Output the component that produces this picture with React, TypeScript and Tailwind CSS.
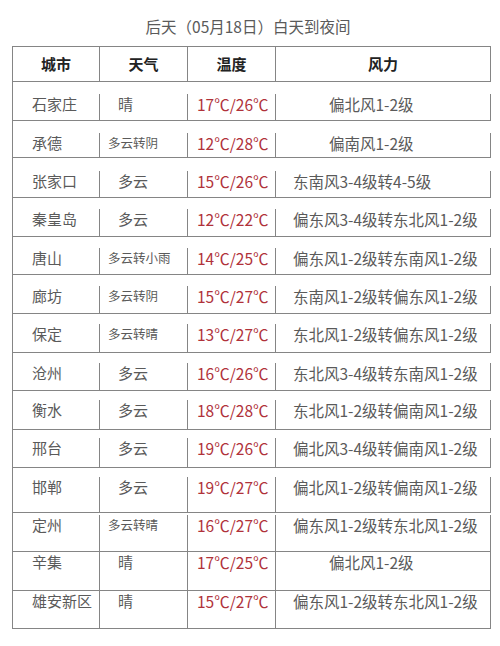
type Row = {
  city: string;
  weather: string;
  temp: string;
  wind: string;
  row: string;
  weatherCls: string;
  windCls: string;
};

const LONG_W = "pl-[8px] text-[12.5px]";
const SHORT_W = "pl-[18px] text-[15px]";
const LONG_F = "pl-[17px]";
const SHORT_F = "pl-[53px]";

const rows: Row[] = [
  { city: "石家庄", weather: "晴", temp: "17℃/26℃", wind: "偏北风1-2级", row: "h-[39px] pt-[12px]", weatherCls: SHORT_W, windCls: SHORT_F },
  { city: "承德", weather: "多云转阴", temp: "12℃/28℃", wind: "偏南风1-2级", row: "h-[37px] pt-[12px]", weatherCls: LONG_W, windCls: SHORT_F },
  { city: "张家口", weather: "多云", temp: "15℃/26℃", wind: "东南风3-4级转4-5级", row: "h-[40px] pt-[13px]", weatherCls: SHORT_W, windCls: LONG_F },
  { city: "秦皇岛", weather: "多云", temp: "12℃/22℃", wind: "偏东风3-4级转东北风1-2级", row: "h-[39px] pt-[11px]", weatherCls: SHORT_W, windCls: LONG_F },
  { city: "唐山", weather: "多云转小雨", temp: "14℃/25℃", wind: "偏东风1-2级转东南风1-2级", row: "h-[38px] pt-[11px]", weatherCls: LONG_W, windCls: LONG_F },
  { city: "廊坊", weather: "多云转阴", temp: "15℃/27℃", wind: "东南风1-2级转偏东风1-2级", row: "h-[39px] pt-[11px]", weatherCls: LONG_W, windCls: LONG_F },
  { city: "保定", weather: "多云转晴", temp: "13℃/27℃", wind: "东北风1-2级转偏东风1-2级", row: "h-[39px] pt-[10px]", weatherCls: LONG_W, windCls: LONG_F },
  { city: "沧州", weather: "多云", temp: "16℃/26℃", wind: "东北风3-4级转东南风1-2级", row: "h-[38px] pt-[10px]", weatherCls: SHORT_W, windCls: LONG_F },
  { city: "衡水", weather: "多云", temp: "18℃/28℃", wind: "东北风1-2级转偏南风1-2级", row: "h-[39px] pt-[9px]", weatherCls: SHORT_W, windCls: LONG_F },
  { city: "邢台", weather: "多云", temp: "19℃/26℃", wind: "偏北风3-4级转偏南风1-2级", row: "h-[38px] pt-[8px]", weatherCls: SHORT_W, windCls: LONG_F },
  { city: "邯郸", weather: "多云", temp: "19℃/27℃", wind: "偏北风1-2级转偏南风1-2级", row: "h-[45px] pt-[9px]", weatherCls: SHORT_W, windCls: LONG_F },
  { city: "定州", weather: "多云转晴", temp: "16℃/27℃", wind: "偏东风1-2级转东北风1-2级", row: "h-[39px] pt-[2px]", weatherCls: LONG_W, windCls: LONG_F },
  { city: "辛集", weather: "晴", temp: "17℃/25℃", wind: "偏北风1-2级", row: "h-[39px] pt-[0px]", weatherCls: SHORT_W, windCls: SHORT_F },
  { city: "雄安新区", weather: "晴", temp: "15℃/27℃", wind: "偏东风1-2级转东北风1-2级", row: "h-[38px] pt-[0px]", weatherCls: SHORT_W, windCls: LONG_F },
];

const cols = "grid grid-cols-[87px_88px_88px_1fr]";
const cell = "border-r border-[#858585]";

export default function App() {
  return (
    <div className="w-[500px] h-[646px] bg-white font-['Noto_Sans_CJK_SC','Noto_Sans',sans-serif] text-[#5a5a5a]">
      <div className="pt-[16px] h-[46px] text-center text-[15.5px] leading-[20px] pr-[4px]">
        后天（05月18日）白天到夜间
      </div>

      <div className="ml-[12px] w-[479px] border-l border-t border-[#858585]">
        {/* header */}
        <div className={`${cols} h-[35px] border-b border-[#858585] text-[15px] font-bold text-[#222]`}>
          <div className={`${cell} flex items-center justify-center`}>城市</div>
          <div className={`${cell} flex items-center justify-center`}>天气</div>
          <div className={`${cell} flex items-center justify-center`}>温度</div>
          <div className={`${cell} flex items-center justify-center`}>风力</div>
        </div>

        {rows.map((r) => (
          <div key={r.city} className={`${cols} ${r.row} border-b border-[#858585] leading-[20px]`}>
            <div className={`${cell} pl-[19px] text-[15px] whitespace-nowrap`}>{r.city}</div>
            <div className={`${cell} ${r.weatherCls} whitespace-nowrap`}>{r.weather}</div>
            <div className={`${cell} pl-[9px] text-[15.5px] text-[#b0323a] whitespace-nowrap`}>{r.temp}</div>
            <div className={`${cell} ${r.windCls} text-[15.5px] whitespace-nowrap`}>{r.wind}</div>
          </div>
        ))}
      </div>
    </div>
  );
}
